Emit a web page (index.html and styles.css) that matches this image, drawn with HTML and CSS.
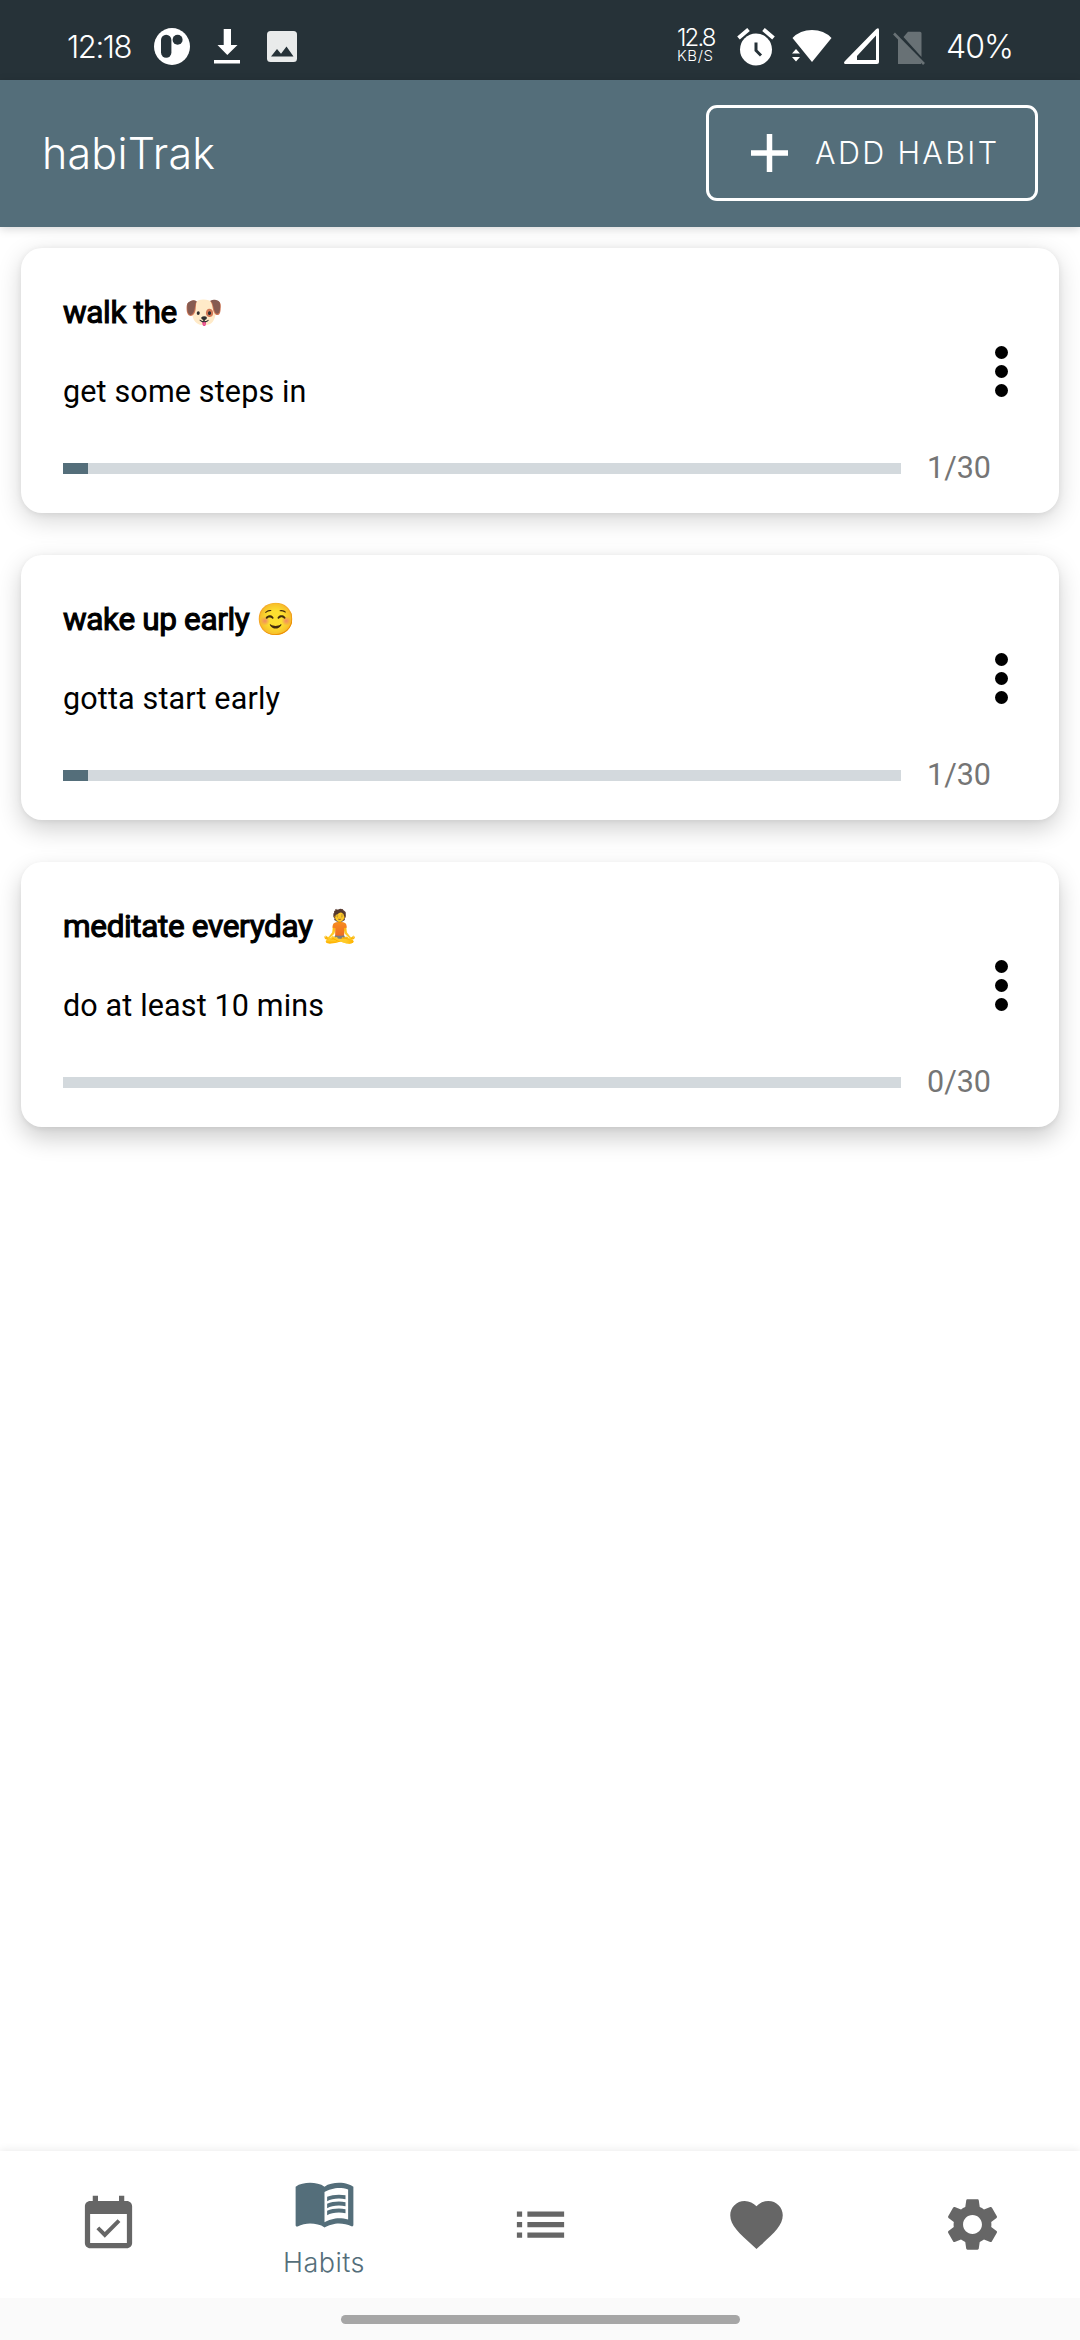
FILE: index.html
```html
<!DOCTYPE html>
<html lang="en">
<head>
<meta charset="utf-8">
<title>habiTrak</title>
<link rel="stylesheet" href="styles.css">
</head>
<body>
<div class="app">
  <div class="status">
    <div class="status-group">
      <span class="clock">12:18</span>
      <svg class="s-app" width="36" height="37" viewBox="0 0 36 37"><ellipse cx="18" cy="18.5" rx="18" ry="18.5" fill="#fff"/><rect x="7" y="6.8" width="10.4" height="23" rx="5.2" fill="#263238"/><circle cx="23.6" cy="11.7" r="5" fill="#263238"/></svg>
      <svg class="s-down" width="26" height="36" viewBox="0 0 26 36"><path d="M9.7 1h7.3v16h6.5L13.3 27 3.5 17h6.2zM0 32h26v3.500H0z" fill="#fff"/></svg>
      <svg class="s-image" width="30" height="31" viewBox="0 0 30 31"><rect width="30" height="31" rx="3.500" fill="#e9ebeb"/><path d="M4 25.500l6-7.500 4 4.800 5.500-7.300 7 10z" fill="#263238"/></svg>
    </div>
    <div class="status-group">
      <div class="speed"><span class="speed-num">12.8</span><span class="speed-unit">KB/S</span></div>
      <svg class="s-alarm" width="38" height="38" viewBox="0 0 38 38"><path d="M1.500 10L11.500 1.500M26.500 1.500l10 8.500" stroke="#fff" stroke-width="4" fill="none"/><circle cx="19" cy="21.500" r="16" fill="#fff"/><path d="M19 14.500v8l5 5" stroke="#263238" stroke-width="3" fill="none"/></svg>
      <svg class="s-wifi" width="40" height="34" viewBox="0 0 40 34"><path d="M.5 9Q8 1 20 1t19.500 8L20 33z" fill="#fff"/><path d="M-1 19h9.500v17H-1z" fill="#263238"/><path d="M0 24.500L4 20l4 4.500zM0 28h8l-4 4.500z" fill="#fff"/></svg>
      <svg class="s-signal" width="35" height="36" viewBox="0 0 35 36"><path fill-rule="evenodd" d="M1 36Q-1 35 1 33L32 1.300Q35 -1 35 2v32q0 2-2 2zM13 32h19V7.500L13 28z" fill="#fff"/></svg>
      <svg class="s-sim" width="32" height="34" viewBox="0 0 32 34"><path d="M5 6.500L28 31v2H5zM15 .8h12q1.500 0 1.500 1.500V26L10.500 6z" fill="#687175"/><path d="M1 2.500L31 33" stroke="#687175" stroke-width="2.600"/></svg>
      <span class="battery">40%</span>
    </div>
  </div>

  <header class="header">
    <h1 class="brand">habiTrak</h1>
    <button class="add">
      <svg width="37" height="38" viewBox="0 0 37 38"><path d="M0 19h37M18.500 0v38" stroke="#fff" stroke-width="5.500"/></svg>
      <span class="add-label">ADD HABIT</span>
    </button>
  </header>

  <main class="list">
    <article class="card">
      <div class="info">
        <h2 class="title">walk the <span class="emoji">🐶</span></h2>
        <p class="desc">get some steps in</p>
        <div class="progress"><div class="track"><div class="fill" style="width:3%"></div></div><span class="count">1/30</span></div>
      </div>
      <svg class="more" width="13" height="51" viewBox="0 0 13 51"><circle cx="6.500" cy="6.500" r="6.500"/><circle cx="6.500" cy="25.500" r="6.500"/><circle cx="6.500" cy="44.500" r="6.500"/></svg>
    </article>
    <article class="card">
      <div class="info">
        <h2 class="title">wake up early <span class="emoji">☺️</span></h2>
        <p class="desc">gotta start early</p>
        <div class="progress"><div class="track"><div class="fill" style="width:3%"></div></div><span class="count">1/30</span></div>
      </div>
      <svg class="more" width="13" height="51" viewBox="0 0 13 51"><circle cx="6.500" cy="6.500" r="6.500"/><circle cx="6.500" cy="25.500" r="6.500"/><circle cx="6.500" cy="44.500" r="6.500"/></svg>
    </article>
    <article class="card">
      <div class="info">
        <h2 class="title">meditate everyday <span class="emoji">🧘</span></h2>
        <p class="desc">do at least 10 mins</p>
        <div class="progress"><div class="track"><div class="fill" style="width:0%"></div></div><span class="count">0/30</span></div>
      </div>
      <svg class="more" width="13" height="51" viewBox="0 0 13 51"><circle cx="6.500" cy="6.500" r="6.500"/><circle cx="6.500" cy="25.500" r="6.500"/><circle cx="6.500" cy="44.500" r="6.500"/></svg>
    </article>
  </main>

  <nav class="tabs">
    <a class="tab"><svg viewBox="0 0 24 24"><path d="M16.530 11.060L15.470 10l-4.880 4.880-2.120-2.120-1.060 1.060L10.590 17l5.940-5.940zM19 3h-1V1h-2v2H8V1H6v2H5c-1.110 0-1.990.9-1.990 2L3 19c0 1.100.89 2 2 2h14c1.100 0 2-.9 2-2V5c0-1.100-.9-2-2-2zm0 16H5V8h14v11z"/></svg></a>
    <a class="tab active"><svg viewBox="0 0 24 24"><path d="M21 5c-1.110-.35-2.330-.5-3.500-.5-1.950 0-4.050.4-5.500 1.500-1.450-1.100-3.550-1.500-5.500-1.500S2.450 4.900 1 6v14.650c0 .25.25.5.5.5.1 0 .15-.05.25-.05C3.100 20.450 5.050 20 6.500 20c1.950 0 4.050.4 5.500 1.500 1.350-.85 3.800-1.500 5.500-1.500 1.650 0 3.350.3 4.750 1.050.1.050.15.050.25.050.25 0 .5-.25.5-.5V6c-.6-.45-1.250-.75-2-1zm0 13.500c-1.100-.35-2.300-.5-3.500-.5-1.700 0-4.150.65-5.500 1.500V8c1.350-.85 3.800-1.500 5.500-1.500 1.200 0 2.400.15 3.500.5v11.500z"/><path d="M17.500 10.500c.88 0 1.730.09 2.500.26V9.240c-.79-.15-1.640-.24-2.500-.24-1.700 0-3.240.29-4.500.83v1.660c1.130-.64 2.700-.99 4.500-.99zM13 12.490v1.660c1.130-.64 2.700-.99 4.500-.99.88 0 1.730.09 2.500.26V11.900c-.79-.15-1.640-.24-2.500-.24-1.700 0-3.240.3-4.500.83zM17.500 14.330c-1.700 0-3.240.29-4.500.83v1.660c1.130-.64 2.700-.99 4.500-.99.88 0 1.730.09 2.500.26v-1.520c-.79-.16-1.640-.24-2.500-.24z"/></svg><span class="tab-label">Habits</span></a>
    <a class="tab"><svg viewBox="0 0 24 24"><path d="M3 13h2v-2H3v2zm0 4h2v-2H3v2zm0-8h2V7H3v2zm4 4h14v-2H7v2zm0 4h14v-2H7v2zM7 7v2h14V7H7z"/></svg></a>
    <a class="tab"><svg viewBox="0 0 24 24"><path d="M12 21.350l-1.450-1.320C5.400 15.360 2 12.280 2 8.500 2 5.420 4.420 3 7.500 3c1.740 0 3.410.81 4.500 2.090C13.090 3.810 14.760 3 16.500 3 19.580 3 22 5.420 22 8.500c0 3.780-3.400 6.860-8.550 11.540L12 21.350z"/></svg></a>
    <a class="tab"><svg viewBox="0 0 24 24"><path d="M19.140 12.940c.04-.3.060-.61.060-.94 0-.32-.02-.64-.07-.94l2.030-1.580c.18-.14.23-.41.120-.61l-1.920-3.320c-.12-.22-.37-.29-.59-.22l-2.390.96c-.5-.38-1.030-.7-1.620-.94l-.36-2.540c-.04-.24-.24-.41-.48-.41h-3.840c-.24 0-.43.17-.47.41l-.36 2.540c-.59.24-1.130.57-1.620.94l-2.390-.96c-.22-.08-.47 0-.59.22L2.740 8.870c-.12.21-.08.47.120.61l2.030 1.580c-.05.3-.09.63-.09.94s.02.64.070.94l-2.030 1.580c-.18.14-.23.41-.12.61l1.920 3.320c.12.22.37.29.59.22l2.390-.96c.5.38 1.030.7 1.620.94l.36 2.540c.05.24.24.41.48.41h3.840c.24 0 .44-.17.47-.41l.36-2.540c.59-.24 1.130-.56 1.620-.94l2.390.96c.22.080.47 0 .59-.22l1.920-3.320c.12-.22.070-.47-.12-.61l-2.010-1.580zM12 15.600c-1.980 0-3.600-1.620-3.600-3.600s1.620-3.600 3.600-3.600 3.600 1.620 3.600 3.600-1.620 3.600-3.600 3.600z"/></svg></a>
  </nav>
  <div class="gesture"><div class="pill"></div></div>
</div>
</body>
</html>
```
FILE: styles.css
```css
* { box-sizing: border-box; }

body {
  margin: 0;
  background: #fff;
  font-family: Roboto, "Noto Color Emoji", sans-serif;
}

svg { display: block; flex: none; }

.app {
  display: flex;
  flex-direction: column;
  width: 1080px;
  height: 2340px;
  overflow: hidden;
}

.status {
  display: flex;
  justify-content: space-between;
  height: 80px;
  padding: 28px 69px 0 67px;
  background: #263238;
  color: #fff;
  font-family: Inter, sans-serif;
  font-weight: 300;
}

.status-group { display: flex; align-items: flex-start; height: 38px; }
.clock { width: 87px; font-size: 31px; line-height: 38px; letter-spacing: -1.4px; }
.s-down { margin-left: 24px; }
.s-image { margin: 3px 0 0 27px; }
.speed { display: flex; flex-direction: column; width: 60px; white-space: nowrap; }
.speed-num { font-size: 24px; line-height: 20px; letter-spacing: -1.9px; }
.speed-unit { font-size: 15px; line-height: 16px; letter-spacing: .6px; }
.s-wifi { margin: 1px 0 0 17px; }
.s-signal { margin-left: 12px; }
.s-sim { margin: 3px 0 0 14px; }
.battery { width: 65px; margin-left: 21px; font-size: 32px; line-height: 38px; letter-spacing: -1px; }

.header {
  display: flex;
  align-items: center;
  justify-content: space-between;
  height: 147px;
  padding: 0 42px 2px;
  background: #546e7a;
  color: #fff;
  font-family: Inter, sans-serif;
  box-shadow: 0 2px 9px rgba(0, 0, 0, .16);
}

.brand { margin: 0; font-size: 43px; font-weight: 300; line-height: 60px; letter-spacing: .2px; }

.add {
  display: flex;
  align-items: center;
  gap: 27px;
  width: 332px;
  height: 96px;
  padding: 0 0 0 42px;
  border: 3px solid #fff;
  border-radius: 11px;
  background: none;
  color: #fff;
  font: 300 30.500px Inter, sans-serif;
}

.add-label { letter-spacing: 2.350px; white-space: nowrap; }

.list {
  display: flex;
  flex: 1;
  flex-direction: column;
  gap: 42px;
  padding: 21px;
}

.card {
  display: flex;
  justify-content: space-between;
  height: 265px;
  padding: 43px 51px 0 42px;
  border-radius: 21px;
  background: #fff;
  box-shadow: 0 7px 24px rgba(0, 0, 0, .17), 0 1px 6px rgba(0, 0, 0, .07);
}

.card:nth-child(2) { box-shadow: 0 9px 24px rgba(0, 0, 0, .19), 0 1px 5px rgba(0, 0, 0, .06); }
.card:nth-child(3) { box-shadow: 0 11px 25px rgba(0, 0, 0, .2), 0 2px 5px rgba(0, 0, 0, .06); }

.info { width: 928px; }

.title {
  height: 44px;
  margin: 0;
  font-size: 31.500px;
  font-weight: 400;
  line-height: 44px;
  letter-spacing: -.350px;
  white-space: nowrap;
  -webkit-text-stroke: 1.100px #000;
}

.emoji { -webkit-text-stroke: 0; }

.desc { margin: 35px 0 0; font-size: 30.500px; line-height: 44px; letter-spacing: .150px; }

.progress { display: flex; align-items: center; gap: 26px; margin-top: 32px; height: 44px; }
.track { flex: none; width: 838px; height: 11px; background: #d3d9dd; }
.fill { height: 11px; background: #546e7a; }
.count { color: #757575; font-size: 30.500px; line-height: 44px; }
.more { margin-top: 55px; }

.tabs {
  display: flex;
  height: 147px;
  background: #fff;
  box-shadow: 0 0 9px rgba(0, 0, 0, .1);
}

.tab {
  display: flex;
  flex: 1;
  flex-direction: column;
  align-items: center;
  justify-content: center;
  color: #666;
}

.tab svg { width: 63px; height: 63px; fill: currentColor; }
.tab.active { justify-content: flex-start; padding-top: 20px; color: #546e7a; }
.tab-label { margin-top: 11px; font: 300 27px/36px Inter, sans-serif; letter-spacing: .5px; }

.gesture {
  display: flex;
  justify-content: center;
  height: 42px;
  padding-top: 17px;
  background: #fafafa;
}

.pill { width: 399px; height: 9px; border-radius: 5px; background: #a6a6a6; }
```
